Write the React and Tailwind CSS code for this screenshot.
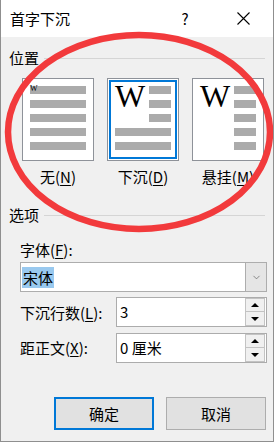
import { ChevronDown } from 'lucide-react';

const Bar = ({ className = '' }) => <div className={`h-[8px] bg-[#ababab] ${className}`} />;

const Mn = ({ children }) => <span className="underline underline-offset-[2px] decoration-1">{children}</span>;

const BigW = () => (
    <span className="font-['Liberation_Serif',serif] text-[32px] leading-[22px] -mt-[1px] text-black">W</span>
);

const SpinBox = ({ value }) => (
    <div className="w-[151px] h-[30px] border border-[#acacac] bg-white flex items-center">
        <span className="flex-1 pl-[3px] text-[15px] leading-[20px]">{value}</span>
        <div className="w-[20px] h-[28px] mr-[1px] flex flex-col">
            <div className="h-[14px] border border-[#c3c3c3] bg-[#f0f0f0] flex items-center justify-center">
                <div className="w-0 h-0 border-l-[4px] border-r-[4px] border-b-[4px] border-l-transparent border-r-transparent border-b-black" />
            </div>
            <div className="h-[14px] border border-t-0 border-[#c3c3c3] bg-[#f0f0f0] flex items-center justify-center">
                <div className="w-0 h-0 border-l-[4px] border-r-[4px] border-t-[4px] border-l-transparent border-r-transparent border-t-black" />
            </div>
        </div>
    </div>
);

export default function App() {
    return (
        <div className="relative w-[274px] h-[442px] bg-[#f0f0f0] border-x border-b border-[#8f8f8f] text-black font-['Noto_Sans_CJK_SC',sans-serif] overflow-hidden">
            {/* Title bar */}
            <div className="h-[37px] bg-white flex items-center pl-[9px]">
                <span className="text-[15px] leading-[20px] flex-1">首字下沉</span>
                <span className="text-[15px] leading-[20px] w-[12px] mr-[46px] text-center">?</span>
                <svg width="13" height="13" viewBox="0 0 13 13" className="mr-[23px]">
                    <path d="M0.5 0.5 L12.5 12.5 M12.5 0.5 L0.5 12.5" stroke="#000" strokeWidth="1.1" fill="none" />
                </svg>
            </div>

            {/* 位置 */}
            <div className="mt-[11px] h-[20px] flex items-center pl-[8px] pr-[8px]">
                <span className="text-[15px] leading-[20px]">位置</span>
                <div className="flex-1 h-px bg-[#d5d5d5] ml-[5px]" />
            </div>

            <div className="mt-[10px] pl-[21px] flex gap-[13px]">
                {/* none */}
                <div className="flex flex-col items-center">
                    <div className="w-[72px] h-[83px] border border-[#8e9299] bg-white p-[7px] flex flex-col gap-[6px]">
                        <div className="relative h-[8px] bg-[#ababab]">
                            <span className="absolute left-0 -top-[1px] font-['Liberation_Serif',serif] text-[8px] leading-none">W</span>
                        </div>
                        <Bar />
                        <Bar />
                        <Bar />
                        <Bar />
                    </div>
                    <span className="mt-[6px] text-[15px] leading-[20px]">无(<Mn>N</Mn>)</span>
                </div>

                {/* dropped */}
                <div className="flex flex-col items-center">
                    <div className="w-[72px] h-[83px] border border-[#8e9299] bg-white p-[1px]">
                        <div className="h-full border-2 border-[#0078d7] px-[4px] pt-[4px] flex flex-col gap-[6px]">
                            <div className="flex justify-between">
                                <BigW />
                                <div className="w-[22px] flex flex-col gap-[6px]">
                                    <Bar />
                                    <Bar />
                                    <Bar />
                                </div>
                            </div>
                            <Bar />
                            <Bar />
                        </div>
                    </div>
                    <span className="mt-[6px] text-[15px] leading-[20px]">下沉(<Mn>D</Mn>)</span>
                </div>

                {/* in margin */}
                <div className="flex flex-col items-center">
                    <div className="w-[72px] h-[83px] border border-[#8e9299] bg-white p-[7px] flex justify-between">
                        <BigW />
                        <div className="w-[22px] flex flex-col gap-[6px]">
                            <Bar />
                            <Bar />
                            <Bar />
                            <Bar />
                            <Bar />
                        </div>
                    </div>
                    <span className="mt-[6px] text-[15px] leading-[20px]">悬挂(<Mn>M</Mn>)</span>
                </div>
            </div>

            {/* 选项 */}
            <div className="mt-[18px] h-[20px] flex items-center pl-[8px] pr-[8px]">
                <span className="text-[15px] leading-[20px]">选项</span>
                <div className="flex-1 h-px bg-[#d5d5d5] ml-[5px]" />
            </div>

            <div className="pl-[19px] pr-[6px]">
                <div className="mt-[15px] text-[15px] leading-[20px]">字体(<Mn>F</Mn>):</div>
                <div className="mt-[2px] h-[30px] border border-[#adadad] bg-white flex items-center">
                    <div className="flex-1 pl-[1px]">
                        <span className="inline-block bg-[#99c9ef] px-[1px] text-[15px] leading-[21px]">宋体</span>
                    </div>
                    <div className="w-[21px] h-full bg-[#e5e5e5] border-l border-[#adadad] flex items-center justify-center">
                        <ChevronDown className="w-[11px] h-[11px] text-[#555]" strokeWidth={1.4} />
                    </div>
                </div>

                <div className="mt-[5px] flex items-center justify-between">
                    <span className="text-[15px] leading-[20px] pt-[2px]">下沉行数(<Mn>L</Mn>):</span>
                    <SpinBox value="3" />
                </div>
                <div className="mt-[6px] flex items-center justify-between">
                    <span className="text-[15px] leading-[20px]">距正文(<Mn>X</Mn>):</span>
                    <SpinBox value="0 厘米" />
                </div>
            </div>

            {/* buttons */}
            <div className="mt-[34px] flex justify-end gap-[12px] pr-[7px]">
                <button className="w-[100px] h-[33px] border-2 border-[#0078d7] bg-[#e1e1e1] text-[15px] leading-[20px]">确定</button>
                <button className="w-[100px] h-[33px] border border-[#adadad] bg-[#e1e1e1] text-[15px] leading-[20px]">取消</button>
            </div>

            {/* red annotation */}
            <svg className="absolute top-0 left-0 pointer-events-none" width="274" height="442" viewBox="0 0 274 442">
                <ellipse cx="138" cy="132" rx="131" ry="97" fill="none" stroke="#f23a3c" strokeWidth="6.5" />
            </svg>
        </div>
    );
}
